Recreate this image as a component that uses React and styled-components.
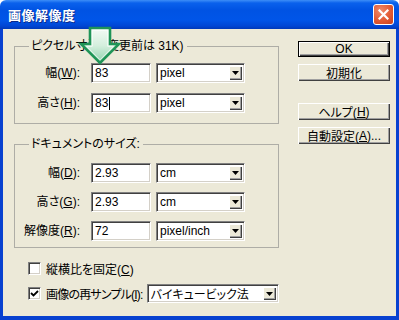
import React from "react";
import styled, { createGlobalStyle } from "styled-components";

const Global = createGlobalStyle`
  html, body { margin: 0; padding: 0; background: #ffffff; }
  body {
    font-family: "Liberation Sans", "Noto Sans CJK JP", sans-serif;
    font-size: 12px;
    color: #000;
    font-feature-settings: "palt";
  }
  #root { width: 399px; height: 320px; }
`;

const Window = styled.div`
  position: relative;
  width: 399px;
  height: 320px;
  display: flex;
  flex-direction: column;
  overflow: hidden;
`;

const TitleBar = styled.div`
  flex: none;
  height: 29px;
  box-sizing: border-box;
  display: flex;
  align-items: center;
  padding: 0 4px 0 8px;
  border-radius: 6px 6px 0 0;
  background: linear-gradient(
    to bottom,
    #3d8ef7 0px,
    #0a61ec 3px,
    #0053e3 10px,
    #0055e8 20px,
    #0046d4 26px,
    #0038b8 29px
  );
`;

const Title = styled.div`
  flex: 1;
  color: #ffffff;
  font-family: "Noto Sans CJK JP", sans-serif;
  font-weight: bold;
  font-size: 13px;
  letter-spacing: 0.5px;
  text-shadow: 1px 1px 0 #0a2a8a;
`;

const CloseButton = styled.div`
  width: 21px;
  height: 21px;
  margin-right: 1px;
  box-sizing: border-box;
  border: 1px solid #ffffff;
  border-radius: 3px;
  background: radial-gradient(circle at 35% 30%, #f08a6a 0%, #e25a34 55%, #c8401c 100%);
  display: flex;
  align-items: center;
  justify-content: center;
`;

const Client = styled.div`
  flex: 1;
  display: flex;
  background: #ece9d8;
  border: 3px solid #0841d0;
  border-top: none;
  border-bottom-width: 4px;
`;

const LeftCol = styled.div`
  width: 265px;
  margin-left: 11px;
  padding-top: 10px;
  display: flex;
  flex-direction: column;
`;

const RightCol = styled.div`
  width: 92px;
  margin-left: 19px;
  padding-top: 12px;
  display: flex;
  flex-direction: column;
`;

const Group = styled.fieldset`
  margin: ${(p) => p.$mt || 0}px 0 0 0;
  padding: ${(p) => p.$pt}px 0 ${(p) => p.$pb}px 0;
  border: 1px solid #aeada6;
  min-width: 0;
  box-sizing: border-box;
  width: 265px;
`;

const Legend = styled.legend`
  margin-left: 14px;
  padding: 0 3px 0 2px;
  line-height: 14px;
  height: 14px;
  white-space: nowrap;
`;

const Rows = styled.div`
  display: grid;
  grid-template-columns: 76px 60px 89px;
  grid-auto-rows: 20px;
  row-gap: ${(p) => p.$gap}px;
  column-gap: 0;
  align-items: center;
`;

const Label = styled.div`
  text-align: right;
  padding-right: 11px;
  white-space: nowrap;
  line-height: 20px;
`;

const Sunken = styled.div`
  flex: none;
  box-sizing: border-box;
  height: ${(p) => p.$h || 20}px;
  width: ${(p) => p.$w}px;
  margin-left: ${(p) => p.$ml || 0}px;
  background: #ffffff;
  border-top: 1px solid #808080;
  border-left: 1px solid #808080;
  border-bottom: 1px solid #ffffff;
  border-right: 1px solid #ffffff;
  box-shadow: inset 1px 1px 0 #404040, inset -1px -1px 0 #d4d0c8;
  display: flex;
  align-items: center;
  padding: 0 2px 0 3px;
  white-space: nowrap;
  font-size: 12px;
`;

const Caret = styled.span`
  display: inline-block;
  width: 1px;
  height: 13px;
  background: #000;
  margin-left: 1px;
`;

const SelectText = styled.span`
  flex: 1;
  overflow: hidden;
`;

const DropButton = styled.div`
  flex: none;
  width: 13px;
  height: ${(p) => p.$h || 14}px;
  box-sizing: border-box;
  background: #ece9d8;
  box-shadow: inset 1px 1px 0 #ffffff, inset -1px -1px 0 #404040, inset -2px -2px 0 #a0a0a0;
  display: flex;
  align-items: center;
  justify-content: center;
`;

const CheckRow = styled.div`
  display: flex;
  align-items: center;
  height: ${(p) => p.$h}px;
  margin-top: ${(p) => p.$mt}px;
  padding-left: 14px;
  white-space: nowrap;
`;

const CheckBox = styled.div`
  flex: none;
  width: 13px;
  height: 13px;
  box-sizing: border-box;
  background: #ffffff;
  border-top: 1px solid #808080;
  border-left: 1px solid #808080;
  border-bottom: 1px solid #ffffff;
  border-right: 1px solid #ffffff;
  box-shadow: inset 1px 1px 0 #404040, inset -1px -1px 0 #d4d0c8;
  margin-right: 5px;
  display: flex;
  align-items: center;
  justify-content: center;
`;

const CheckLabel = styled.span`
  flex: none;
  letter-spacing: ${(p) => p.$ls || 0}px;
`;

const Button = styled.div`
  box-sizing: border-box;
  height: ${(p) => p.$h}px;
  margin-top: ${(p) => p.$mt}px;
  background: #ece9d8;
  border: ${(p) => (p.$default ? "1px solid #000000" : "none")};
  box-shadow: inset 1px 1px 0 #ffffff, inset -1px -1px 0 #404040, inset -2px -2px 0 #a0a0a0;
  display: flex;
  align-items: center;
  justify-content: center;
  white-space: nowrap;
  font-size: 12px;
`;

const ArrowWrap = styled.div`
  position: absolute;
  left: 78px;
  top: 25px;
  width: 44px;
  height: 42px;
`;

const Arrow = () => (
  <ArrowWrap>
    <svg width="44" height="42" viewBox="0 0 44 42">
      <defs>
        <linearGradient id="ag" x1="0" y1="0" x2="0" y2="1">
          <stop offset="0" stopColor="#f4fbf6" />
          <stop offset="0.5" stopColor="#d4efdd" />
          <stop offset="1" stopColor="#8fd2ad" />
        </linearGradient>
      </defs>
      <path
        d="M12 3 H32 V19 H41 L22 38 L3 19 H12 Z"
        fill="url(#ag)"
        stroke="#1f9457"
        strokeWidth="2.6"
        strokeLinejoin="miter"
      />
      <path
        d="M14.3 5.3 H29.7 V21.3 H35.5 L22 34.8 L8.5 21.3 H14.3 Z"
        fill="none"
        stroke="#ffffff"
        strokeOpacity="0.7"
        strokeWidth="1"
      />
    </svg>
  </ArrowWrap>
);

const Tri = () => (
  <svg width="7" height="4" viewBox="0 0 7 4">
    <path d="M0 0 H7 L3.5 4 Z" fill="#000" />
  </svg>
);

const Select = ({ w, h, ml, children, bh }) => (
  <Sunken $w={w} $h={h} $ml={ml}>
    <SelectText>{children}</SelectText>
    <DropButton $h={bh}>
      <Tri />
    </DropButton>
  </Sunken>
);

export default function App() {
  return (
    <>
      <Global />
      <Window>
        <TitleBar>
          <Title>画像解像度</Title>
          <CloseButton>
            <svg width="11" height="11" viewBox="0 0 11 11">
              <path d="M1.5 1.5 L9.5 9.5 M9.5 1.5 L1.5 9.5" stroke="#fff" strokeWidth="2.2" strokeLinecap="square" />
            </svg>
          </CloseButton>
        </TitleBar>
        <Client>
          <LeftCol>
            <Group $pt={10} $pb={10}>
              <Legend>ピクセル寸法 (変更前は 31K)</Legend>
              <Rows $gap={10}>
                <Label>
                  幅(<u>W</u>):
                </Label>
                <Sunken $w={60}>83</Sunken>
                <Select w={89} ml={5}>pixel</Select>
                <Label>
                  高さ(<u>H</u>):
                </Label>
                <Sunken $w={60}>
                  83
                  <Caret />
                </Sunken>
                <Select w={89} ml={5}>pixel</Select>
              </Rows>
            </Group>
            <Group $mt={13} $pt={12} $pb={6}>
              <Legend>ドキュメントのサイズ:</Legend>
              <Rows $gap={9}>
                <Label>
                  幅(<u>D</u>):
                </Label>
                <Sunken $w={60}>2.93</Sunken>
                <Select w={89} ml={5}>cm</Select>
                <Label>
                  高さ(<u>G</u>):
                </Label>
                <Sunken $w={60}>2.93</Sunken>
                <Select w={89} ml={5}>cm</Select>
                <Label>
                  解像度(<u>R</u>):
                </Label>
                <Sunken $w={60}>72</Sunken>
                <Select w={89} ml={5}>pixel/inch</Select>
              </Rows>
            </Group>
            <CheckRow $h={16} $mt={12}>
              <CheckBox />
              <CheckLabel>
                縦横比を固定(<u>C</u>)
              </CheckLabel>
            </CheckRow>
            <CheckRow $h={19} $mt={8}>
              <CheckBox>
                <svg width="9" height="9" viewBox="0 0 9 9">
                  <path d="M1 4 L3.5 6.5 L8 2" fill="none" stroke="#000" strokeWidth="1.8" />
                </svg>
              </CheckBox>
              <CheckLabel $ls={-0.8}>
                画像の再サンプル(<u>I</u>):
              </CheckLabel>
              <Select w={132} h={19} bh={13} ml={4}>バイキュービック法</Select>
            </CheckRow>
          </LeftCol>
          <RightCol>
            <Button $default $h={16} $mt={0}>
              OK
            </Button>
            <Button $h={17} $mt={7}>
              初期化
            </Button>
            <Button $h={17} $mt={22}>
              ヘルプ(<u>H</u>)
            </Button>
            <Button $h={17} $mt={7}>
              自動設定(<u>A</u>)...
            </Button>
          </RightCol>
        </Client>
        <Arrow />
      </Window>
    </>
  );
}
